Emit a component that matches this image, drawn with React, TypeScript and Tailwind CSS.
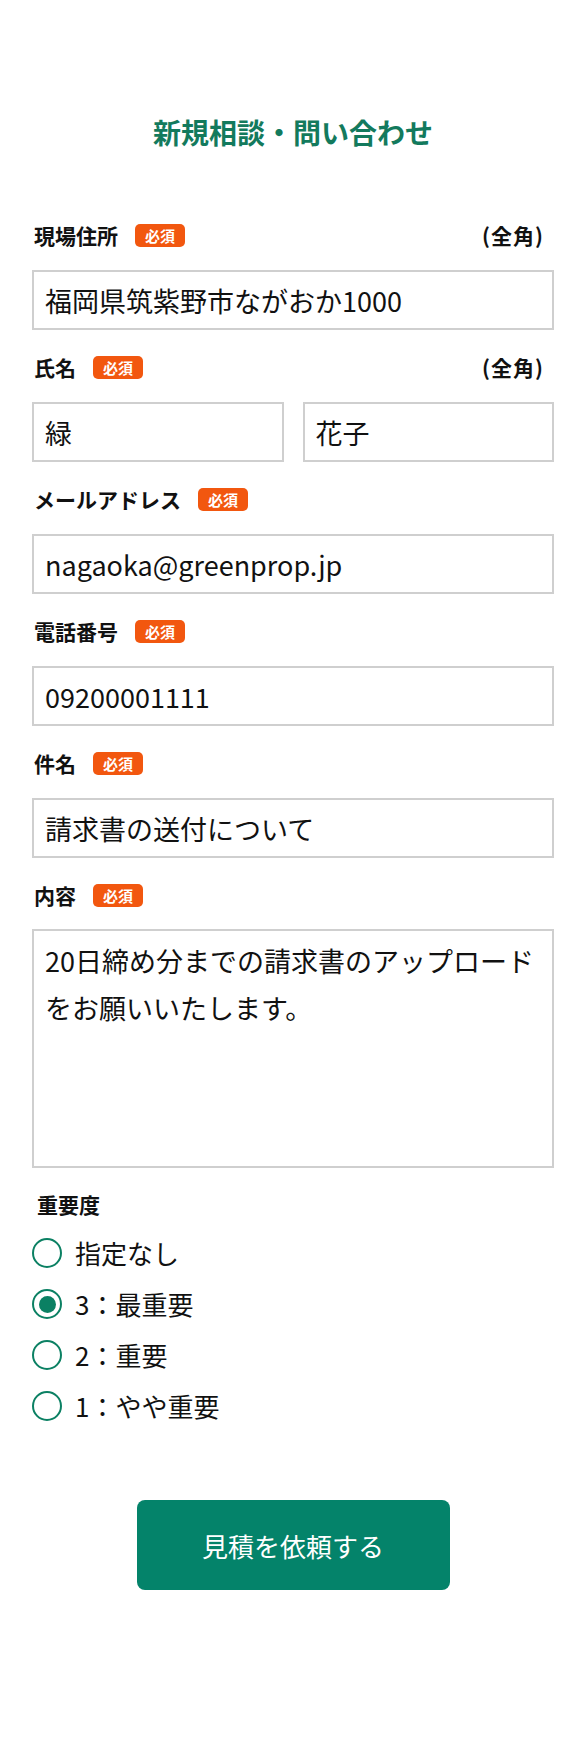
import { useState } from 'react';

const font = { fontFamily: '"Noto Sans CJK JP", "Noto Sans", sans-serif' };

function Badge() {
  return (
    <span className="ml-[17px] inline-flex h-[23px] w-[50px] items-center justify-center rounded-[5px] bg-[#f2570f] text-[15px] font-bold leading-none text-white">
      必須
    </span>
  );
}

function LabelRow({ label, zenkaku }: { label: string; zenkaku?: boolean }) {
  return (
    <div className="flex h-[30px] items-center justify-between pl-[2px]">
      <div className="flex items-center">
        <span className="text-[21px] font-bold leading-none text-[#111]">{label}</span>
        <Badge />
      </div>
      {zenkaku && (
        <span className="pr-[10px] text-[21px] font-bold leading-none tracking-[1px] text-[#111]">(全角)</span>
      )}
    </div>
  );
}

const inputCls =
  'h-[60px] w-full border-2 border-[#cfcfcf] bg-white px-[11px] text-[27px] text-[#111] outline-none';

const options = ['指定なし', '3：最重要', '2：重要', '1：やや重要'];

export default function App() {
  const [priority, setPriority] = useState(1);

  return (
    <div className="bg-white px-8 pb-[100px]" style={font}>
      {/* Title */}
      <h1 className="mt-[112px] flex h-[40px] items-center justify-center text-[28px] font-bold text-[#137a5d]">
        新規相談・問い合わせ
      </h1>

      <form className="mt-[68px] flex flex-col" onSubmit={(e) => e.preventDefault()}>
        <LabelRow label="現場住所" zenkaku />
        <input className={`${inputCls} mt-[20px]`} defaultValue="福岡県筑紫野市ながおか1000" />

        <div className="mt-[22px]">
          <LabelRow label="氏名" zenkaku />
        </div>
        <div className="mt-[20px] flex gap-[19px]">
          <input className={inputCls} defaultValue="緑" />
          <input className={inputCls} defaultValue="花子" />
        </div>

        <div className="mt-[22px]">
          <LabelRow label="メールアドレス" />
        </div>
        <input className={`${inputCls} mt-[20px]`} defaultValue="nagaoka@greenprop.jp" />

        <div className="mt-[22px]">
          <LabelRow label="電話番号" />
        </div>
        <input className={`${inputCls} mt-[20px]`} defaultValue="09200001111" />

        <div className="mt-[22px]">
          <LabelRow label="件名" />
        </div>
        <input className={`${inputCls} mt-[20px]`} defaultValue="請求書の送付について" />

        <div className="mt-[22px]">
          <LabelRow label="内容" />
        </div>
        <textarea
          className="mt-[19px] h-[239px] w-full resize-none border-2 border-[#cfcfcf] px-[11px] pt-[6px] text-[27px] leading-[47px] text-[#111] outline-none"
          defaultValue={'20日締め分までの請求書のアップロード\nをお願いいたします。'}
        />

        {/* Priority */}
        <div className="mt-[22px] flex h-[30px] items-center pl-[5px] text-[21px] font-bold text-[#111]">
          重要度
        </div>
        <div className="mt-[18px] flex flex-col gap-[21px]">
          {options.map((opt, i) => (
            <label key={opt} className="flex h-[30px] cursor-pointer items-center" onClick={() => setPriority(i)}>
              <span className="flex h-[30px] w-[30px] items-center justify-center rounded-full border-2 border-[#0b8063]">
                {priority === i && <span className="h-[17px] w-[17px] rounded-full bg-[#0b8063]" />}
              </span>
              <span className="ml-[13px] text-[26px] leading-none text-[#111]">{opt}</span>
            </label>
          ))}
        </div>

        <div className="mt-[79px] flex justify-center">
          <button
            type="submit"
            className="h-[90px] w-[313px] rounded-[8px] bg-[#04836a] text-[26px] text-white"
          >
            見積を依頼する
          </button>
        </div>
      </form>
    </div>
  );
}
